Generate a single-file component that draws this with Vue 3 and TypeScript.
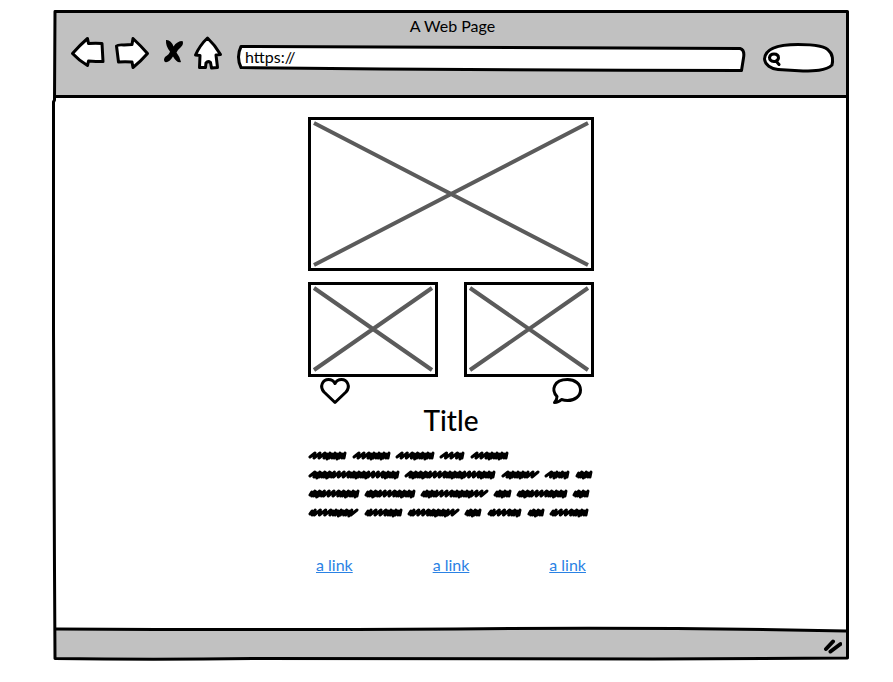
<script setup lang="ts">
interface Word {
  start: number
  end: number
}

const pageTitle = 'A Web Page'
const links: string[] = ['a link', 'a link', 'a link']

// Start and end of each scribbled word, line by line.
const lines: number[][] = [
  [2, 37, 46, 81, 89, 125, 133, 155, 164, 199],
  [2, 90, 98, 186, 195, 230, 238, 260, 269, 283],
  [2, 50, 58, 106, 114, 179, 187, 202, 210, 258, 266, 280],
  [2, 49, 58, 93, 101, 150, 158, 172, 181, 212, 221, 235, 243, 279],
]

const rowHeight = 19

function toWords(line: number[]): Word[] {
  const words: Word[] = []
  for (let i = 0; i < line.length; i += 2) words.push({ start: line[i], end: line[i + 1] })
  return words
}

// A zigzag pen stroke: loose teeth alternate with runs where the pen doubles back.
function scribble(word: Word, row: number): string {
  const mid = row * rowHeight + 9
  const teeth = Math.max(3, Math.round((word.end - word.start) / 5))
  const step = (word.end - word.start) / teeth
  const phase = word.end - word.start < 20 ? 3 : row * 2
  let d = `M${word.start} ${mid + 2}`
  for (let i = 0; i < teeth; i++) {
    const dense = (i + phase) % 7 > 2
    const peak = word.start + (i + 1) * step
    const drop = i % 2 === 0 ? 3 : 4
    if (dense) {
      d += ` L${(peak - 3).toFixed(1)} ${mid - 1} L${(peak - 3).toFixed(1)} ${mid + drop}`
      d += ` L${peak.toFixed(1)} ${mid - 2} L${(peak - 1).toFixed(1)} ${mid + 3}`
    } else {
      d += ` L${peak.toFixed(1)} ${mid - 2}`
      if (i < teeth - 1) d += ` L${(peak - 1).toFixed(1)} ${mid + 3}`
    }
  }
  return d
}

const strokes: string[] = lines.flatMap((line, row) => toWords(line).map((word) => scribble(word, row)))
</script>

<template>
  <div class="page">
    <div class="window">
      <header class="chrome">
        <div class="caption">{{ pageTitle }}</div>
        <div class="toolbar">
          <button class="tool" type="button" aria-label="Back">
            <svg width="34" height="34" viewBox="0 0 34 34">
              <path class="outline" d="M1.500 17.500 Q9 9 16.500 2.500 L17.500 7.500 Q25 7 31 7.500 L32 25.500 Q25 25.500 17.500 25 L16.500 29.500 Q8 24.500 1.500 17.500Z" />
            </svg>
          </button>
          <button class="tool" type="button" aria-label="Forward">
            <svg width="34" height="34" viewBox="0 0 34 34">
              <path class="outline" d="M1.500 10 Q3 8.500 9 9 L17 8.500 L18 2.500 Q26 10 32.500 17.500 Q26 25 18 31.500 L17 26 Q10 25.500 3.500 26Z" />
            </svg>
          </button>
          <button class="tool" type="button" aria-label="Stop">
            <svg width="26" height="34" viewBox="0 0 26 34">
              <path d="M7 4 Q12 3.500 14.500 10.500 Q18 5 23.500 5 Q25 8 22 11 Q18.500 14 17.500 16.500 Q21 21 22 26 Q18 27.500 14 20.500 Q10 27 6 26 Q4 24 6 21 Q10.500 18 11 15.500 Q6.500 10 7 4Z" />
            </svg>
          </button>
          <button class="tool" type="button" aria-label="Home">
            <svg width="28" height="34" viewBox="0 0 28 34">
              <path class="outline" d="M12.500 2 Q20 9 25.500 18.500 L21 19 L22.500 31.500 L16.500 32 L15.500 26.500 Q13 24.500 11 27 L10.500 31.500 L4.500 31.500 L5 19.500 L.5 19 Q5 9 12.500 2Z" />
            </svg>
          </button>
          <label class="address">
            <svg class="shape" viewBox="0 0 508 26" preserveAspectRatio="none" aria-hidden="true">
              <path class="outline" d="M4 1.500 Q250 1.500 503 3.500 Q508 5 506.500 13 L504.500 25.500 Q250 25.500 4 22.500 Q-1 12 4 1.500Z" />
            </svg>
            <input class="field" type="text" value="https://" aria-label="Address" />
          </label>
          <label class="search">
            <svg class="shape" viewBox="0 0 71 29" preserveAspectRatio="none" aria-hidden="true">
              <path class="outline" d="M1.500 16 C2 7 13 1.500 35 1.500 C51 1.500 63 3 66 8 C70 11 70 18 69 22 C63 28 50 28 40 28 L15 26.500 C8 26 2 22 1.500 16Z" />
            </svg>
            <svg class="lens" width="14" height="16" viewBox="0 0 14 16" aria-hidden="true">
              <path d="M2.500 7.500 Q3 4 7 4 Q11.500 4 11.500 8 Q11 11.500 7 11.500 Q2.500 11 2.500 7.500 M9 11 L12 14.500" />
            </svg>
            <input class="field" type="search" aria-label="Search" />
          </label>
        </div>
      </header>

      <main class="content">
        <svg class="picture" viewBox="0 0 286 154" role="img" aria-label="Picture">
          <path class="cross" d="M6 6 L280 148 M6 148 L280 6" />
          <rect class="edge" x="1.500" y="1.500" width="283" height="151" />
        </svg>
        <div class="pair">
          <svg v-for="n in 2" :key="n" class="picture" viewBox="0 0 130 95" role="img" aria-label="Picture">
            <path class="cross" d="M6 6 L124 88 M6 88 L124 6" />
            <rect class="edge" x="1.500" y="1.500" width="127" height="92" />
          </svg>
        </div>
        <div class="actions">
          <button class="tool" type="button" aria-label="Like">
            <svg width="30" height="26" viewBox="0 0 30 26">
              <path class="icon" d="M15 24.500 L4 14 C-1 8 3 1.500 8.500 1.500 C12 1.500 14 3.500 15 5.500 C16 3.500 18 1.500 21.500 1.500 C27 1.500 31 8 26 14Z" />
            </svg>
          </button>
          <button class="tool" type="button" aria-label="Comment">
            <svg width="30" height="26" viewBox="0 0 30 26">
              <path class="icon" d="M5 18.500 C-1 12 1.500 1.500 15.500 1.500 C23 1.500 28.500 6 28.500 12 C28.500 18 23 22.500 15.500 22.500 C13 22.500 11 22 9.500 21.500 C7.500 23.500 5 24.500 2.500 24.500 C4.500 22.500 5 20.500 5 18.500Z" />
            </svg>
          </button>
        </div>
        <h1 class="title">Title</h1>
        <svg class="copy" viewBox="0 0 286 76" aria-hidden="true">
          <path v-for="(d, i) in strokes" :key="i" :d="d" />
        </svg>
        <nav class="links">
          <a v-for="(label, i) in links" :key="i" href="#">{{ label }}</a>
        </nav>
      </main>

      <footer class="status">
        <svg class="shape" viewBox="0 0 790 30" preserveAspectRatio="none" aria-hidden="true">
          <path class="band" d="M0 1 Q200 2 400 1 Q600 -1 790 3 L790 30 L0 30Z" />
          <path class="rim" d="M0 1 Q200 2 400 1 Q600 -1 790 3" />
        </svg>
        <svg class="grip" width="20" height="16" viewBox="0 0 20 16" aria-hidden="true">
          <path d="M4 11 L11 3.500 M8.500 13.500 L18.500 6" />
        </svg>
      </footer>
      <svg class="frame" viewBox="0 0 796 651" preserveAspectRatio="none" aria-hidden="true">
        <path d="M2 1.500 L794.500 1.500 L794.500 500 L794.500 648 L600 649 L200 648.500 Q100 650 2 648.500 L1.500 560 L.5 320 L.5 92 L1.500 90Z" />
      </svg>
    </div>
  </div>
</template>

<style>
body {
  margin: 0;
  background: #fff;
}
</style>

<style scoped>
.page {
  box-sizing: border-box;
  display: flex;
  min-height: 100vh;
  padding: 10px 44px 21px 53px;
  color: #000;
  font-family: Lato, "Open Sans", sans-serif;
  font-size: 16px;
  line-height: 20px;
}

.window {
  position: relative;
  display: flex;
  flex: 1;
  flex-direction: column;
  box-sizing: border-box;
  min-width: 0;
  padding: 3px;
}

.frame {
  position: absolute;
  inset: 0;
  width: 100%;
  height: 100%;
  overflow: visible;
  pointer-events: none;
}

.frame path {
  fill: none;
  stroke: #000;
  stroke-width: 3;
  stroke-linejoin: round;
  vector-effect: non-scaling-stroke;
}

.chrome {
  padding: 3px 12px 23px 15px;
  border-bottom: 3px solid #000;
  background: #c1c1c1;
}

.caption {
  text-align: center;
}

.toolbar {
  display: flex;
  align-items: flex-start;
  gap: 10px;
}

.tool {
  display: block;
  padding: 0;
  border: 0;
  background: none;
  cursor: pointer;
}

.tool svg {
  display: block;
  overflow: visible;
}

.outline {
  fill: #fff;
  stroke: #000;
  stroke-width: 3;
  stroke-linejoin: round;
  vector-effect: non-scaling-stroke;
}

.address,
.search {
  position: relative;
  display: flex;
  align-items: center;
  box-sizing: border-box;
}

.address {
  flex: 1;
  height: 26px;
  margin: 9px 0 0 4px;
  padding: 0 8px 2px;
}

.search {
  width: 71px;
  height: 29px;
  margin: 7px 0 0 8px;
  padding: 0 8px 0 4px;
}

.shape {
  position: absolute;
  inset: 0;
  width: 100%;
  height: 100%;
  overflow: visible;
}

.field {
  position: relative;
  flex: 1;
  min-width: 0;
  padding: 0;
  border: 0;
  outline: 0;
  background: transparent;
  color: inherit;
  font: inherit;
  appearance: none;
}

.lens {
  position: relative;
  fill: none;
  stroke: #000;
  stroke-width: 3;
  stroke-linecap: round;
}

.content {
  display: flex;
  flex: 1;
  flex-direction: column;
  box-sizing: border-box;
  width: 286px;
  margin: 0 auto;
  padding: 19px 0;
}

.picture {
  display: block;
  width: 100%;
}

.cross {
  fill: none;
  stroke: #5b5b5b;
  stroke-width: 4;
}

.edge {
  fill: none;
  stroke: #000;
  stroke-width: 3;
}

.pair {
  display: grid;
  grid-template-columns: 1fr 1fr;
  gap: 26px;
  margin-top: 11px;
}

.actions {
  display: flex;
  justify-content: space-between;
  padding: 1px 12px 0;
}

.icon {
  fill: none;
  stroke: #000;
  stroke-width: 3;
  stroke-linejoin: round;
}

.title {
  margin: 0;
  font-size: 28px;
  font-weight: 500;
  line-height: 32px;
  text-align: center;
}

.copy {
  display: block;
  width: 100%;
  margin-top: 10px;
}

.copy path {
  fill: none;
  stroke: #000;
  stroke-width: 3;
  stroke-linecap: round;
  stroke-linejoin: round;
}

.links {
  display: flex;
  justify-content: space-between;
  margin-top: 33px;
  padding: 0 8px;
}

.links a {
  color: #2a82e4;
}

.status {
  position: relative;
  display: flex;
  align-items: flex-end;
  justify-content: flex-end;
  box-sizing: border-box;
  height: 30px;
  padding: 0 4px 4px 0;
}

.band {
  fill: #c1c1c1;
}

.rim {
  fill: none;
  stroke: #000;
  stroke-width: 3;
  vector-effect: non-scaling-stroke;
}

.grip {
  position: relative;
  fill: none;
  stroke: #000;
  stroke-width: 4;
  stroke-linecap: round;
}
</style>
